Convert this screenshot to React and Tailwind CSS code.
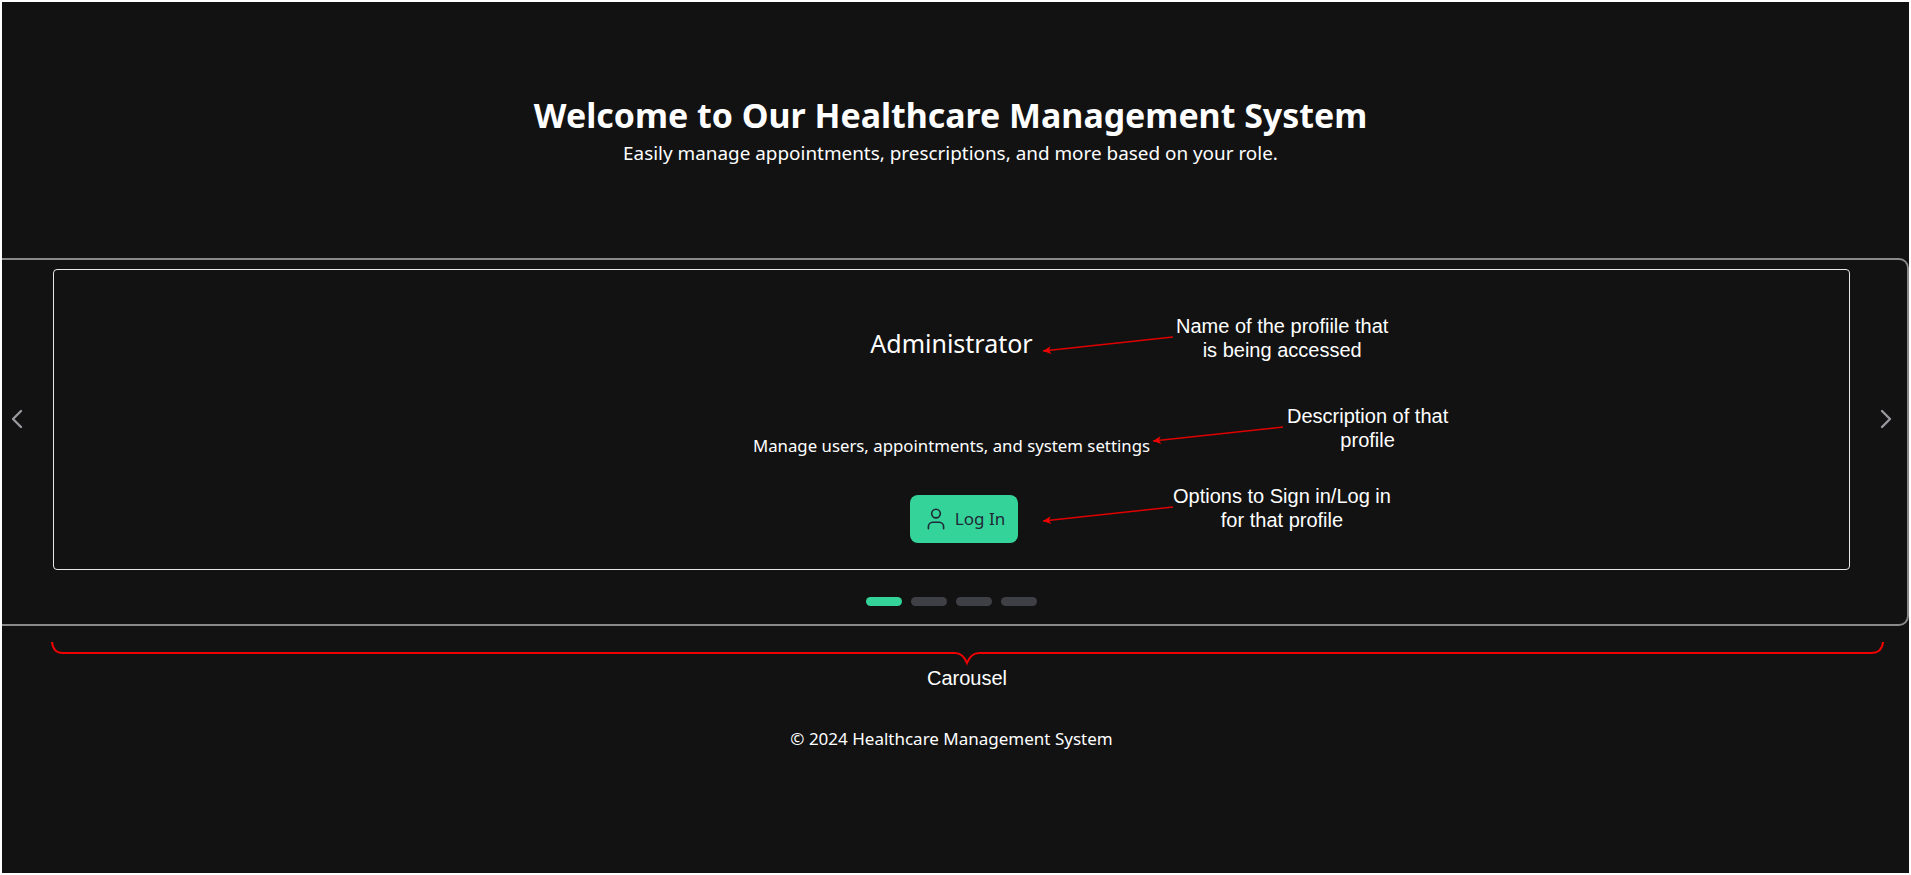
import { ChevronLeft, ChevronRight, User } from 'lucide-react'

function Note({ className, children }) {
  return (
    <div className={`absolute text-center text-white text-[20px] leading-[24px] font-['Liberation_Sans',sans-serif] whitespace-nowrap ${className}`}>
      {children}
    </div>
  )
}

function Arrow({ x1, y1, x2, y2 }) {
  const a = Math.atan2(y2 - y1, x2 - x1) * 180 / Math.PI
  return (
    <g>
      <line x1={x1} y1={y1} x2={x2} y2={y2} stroke="#e00000" strokeWidth="1.5" />
      <path d="M0 0 L8 -4 L6 0 L8 4 Z" fill="#f00000" transform={`translate(${x2} ${y2}) rotate(${a + 180})`} />
    </g>
  )
}

export default function App() {
  return (
    <div className="relative min-h-[875px] bg-[#121212] text-white border-2 border-white overflow-hidden font-['Noto_Sans',sans-serif]">
      {/* Header */}
      <div className="h-[256px] pt-[89px] pr-[10px] text-center">
        <h1 className="text-[33.9px] leading-[48px] font-bold">Welcome to Our Healthcare Management System</h1>
        <p className="text-[18.9px] leading-[24px] mt-[2px]">Easily manage appointments, prescriptions, and more based on your role.</p>
      </div>

      {/* Carousel */}
      <div className="h-[368px] border-2 border-l-0 border-[#8a8a8a] rounded-r-[10px] flex flex-col">
        <div className="flex items-center h-[301px] mt-[9px]">
          <div className="w-[51px] flex justify-start pb-[2px] text-[#9a9aa0]">
            <ChevronLeft className="w-8 h-8 -ml-px" strokeWidth={1.75} />
          </div>
          <div className="flex-1 h-[301px] border border-white/90 rounded flex flex-col items-center">
            <h2 className="text-[25px] leading-[36px] mt-[55px]">Administrator</h2>
            <p className="text-[16.8px] leading-[24px] mt-[73px]">Manage users, appointments, and system settings</p>
            <button className="mt-[37px] ml-[25px] h-[48px] w-[108px] rounded-lg bg-[#34d399] text-[#1f2937] flex items-center justify-center gap-[6px] text-[17px]">
              <User className="w-[26px] h-[26px]" strokeWidth={1.5} />
              Log In
            </button>
          </div>
          <div className="w-[57px] flex justify-end pr-[5px] pb-[2px] text-[#9a9aa0]">
            <ChevronRight className="w-8 h-8" strokeWidth={1.75} />
          </div>
        </div>
        <div className="flex justify-center gap-[9px] mt-[27px] mr-[7px]">
          <span className="w-[36px] h-[9px] rounded-full bg-[#34d399]" />
          <span className="w-[36px] h-[9px] rounded-full bg-[#3f3f46]" />
          <span className="w-[36px] h-[9px] rounded-full bg-[#3f3f46]" />
          <span className="w-[36px] h-[9px] rounded-full bg-[#3f3f46]" />
        </div>
      </div>

      {/* Footer */}
      <p className="mt-[101px] mr-[8px] text-center text-[17px] leading-[24px]">© 2024 Healthcare Management System</p>

      {/* Annotations */}
      <svg className="absolute left-[-2px] top-[-2px] w-[1911px] h-[875px] pointer-events-none" viewBox="0 0 1911 875" fill="none">
        <Arrow x1={1173} y1={337} x2={1043} y2={351} />
        <Arrow x1={1283} y1={427} x2={1153} y2={441} />
        <Arrow x1={1173} y1={507} x2={1043} y2={521} />
        <path d="M52 642 Q53 653 63 653 L955 653 Q963 653 967 663 Q971 653 979 653 L1871 653 Q1882 653 1883 642" stroke="#f00000" strokeWidth="2" />
      </svg>
      <Note className="left-[1174px] top-[312px]">Name of the profiile that<br />is being accessed</Note>
      <Note className="left-[1285px] top-[402px]">Description of that<br />profile</Note>
      <Note className="left-[1171px] top-[482px]">Options to Sign in/Log in<br />for that profile</Note>
      <Note className="left-[925px] top-[664px]">Carousel</Note>
    </div>
  )
}
